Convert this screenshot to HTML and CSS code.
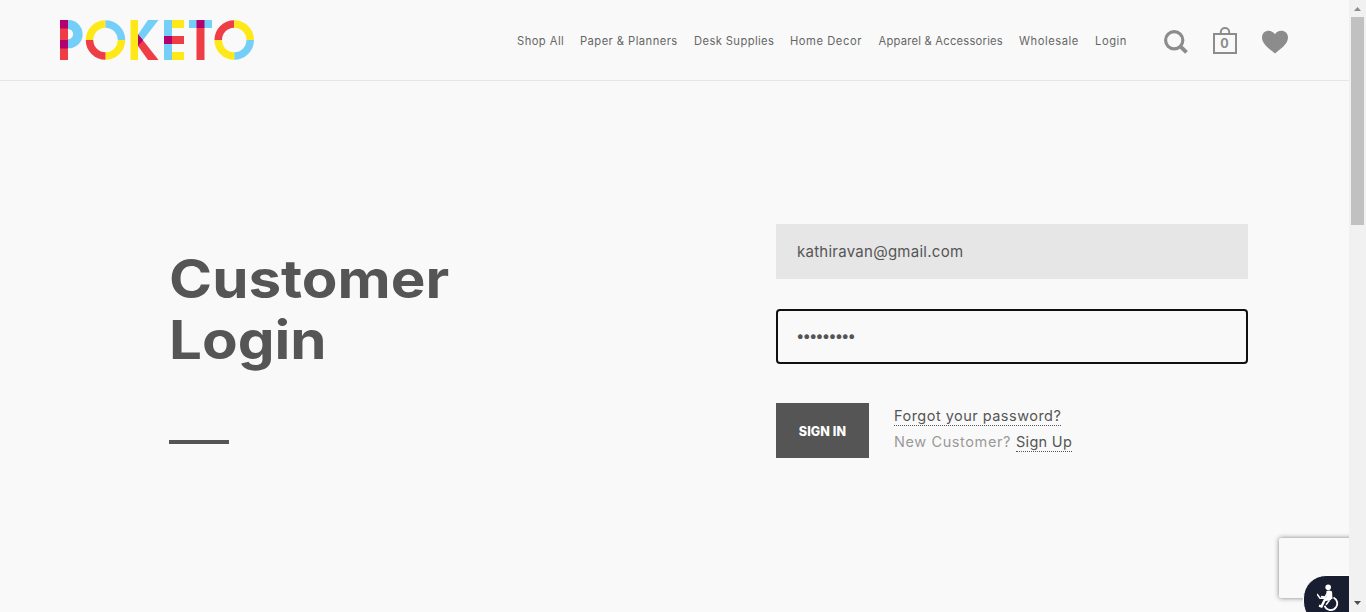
FILE: index.html
```html
<!DOCTYPE html>
<html lang="en">
<head>
<meta charset="utf-8">
<title>Customer Login – Poketo</title>
<link rel="stylesheet" href="styles.css">
</head>
<body>
<div class="page">
  <header class="header">
    <a class="logo" aria-label="Poketo">
      <svg width="195" height="40" viewBox="0 0 195 40">
        <path fill="#73cff7" d="M8 0h.5a14 14 0 0 1 0 28.300H8v-9a5.200 5.200 0 0 0 0-10.400z"/>
        <path fill="#ef3d45" d="M0 0h8v40H0z"/>
        <path fill="#b4006e" d="M0 0h8v8.500H0zM0 20h8v8.500H0z"/>
        <g fill="none" stroke-width="7.500">
          <path stroke="#ffe818" d="M29.500 20A16 16 0 0 1 45.500 4"/>
          <path stroke="#73cff7" d="M45.500 4A16 16 0 0 1 61.500 20"/>
          <path stroke="#ffe818" d="M61.500 20A16 16 0 0 1 45.500 36"/>
          <path stroke="#ef3d45" d="M45.500 36A16 16 0 0 1 29.500 20"/>
        </g>
        <path fill="#73cff7" d="M78 14.500 88 0h10.500L83 20l-5 6z"/>
        <path fill="#ef3d45" d="M78 14l20.500 26H88L78 26z"/>
        <path fill="#b4006e" d="M78 14.500l5.200 5.800L78 26z"/>
        <path fill="#ffe818" d="M70.500 0H78v40h-7.500z"/>
        <path fill="#73cff7" d="M104 0h8v40h-8z"/>
        <path fill="#ffe818" d="M112 0h12v8h-12zM112 32h12v8h-12z"/>
        <path fill="#ef3d45" d="M112 16h12v8h-12z"/>
        <path fill="#b4006e" d="M104 16h8v8h-8z"/>
        <path fill="#73cff7" d="M129 0h23v8h-23z"/>
        <path fill="#ef3d45" d="M136.500 8h8v32h-8z"/>
        <path fill="#b4006e" d="M136.500 0h8v8h-8z"/>
        <g fill="none" stroke-width="7.500">
          <path stroke="#ef3d45" d="M158.200 20A16 16 0 0 1 174.200 4"/>
          <path stroke="#ffe818" d="M174.200 4A16 16 0 0 1 190.200 20"/>
          <path stroke="#73cff7" d="M190.200 20A16 16 0 0 1 174.200 36"/>
          <path stroke="#ffe818" d="M174.200 36A16 16 0 0 1 158.200 20"/>
        </g>
      </svg>
    </a>
    <nav class="nav">
      <a class="nav-shop">Shop All</a>
      <a class="nav-paper">Paper &amp; Planners</a>
      <a class="nav-desk">Desk Supplies</a>
      <a class="nav-home">Home Decor</a>
      <a class="nav-apparel">Apparel &amp; Accessories</a>
      <a class="nav-wholesale">Wholesale</a>
      <a class="nav-login">Login</a>
    </nav>
    <div class="tools">
      <svg width="25" height="26" viewBox="0 0 25 26">
        <circle cx="10.200" cy="11.200" r="8.600" fill="none" stroke="#8c8c8c" stroke-width="3.200"/>
        <path d="M15.800 16.800l6.700 6.600" stroke="#8c8c8c" stroke-width="4"/>
      </svg>
      <span class="bag">
        <svg width="24" height="28" viewBox="0 0 24 28">
          <path d="M1 7h22v19H1zM7.800 7V5a4.200 4 0 0 1 8.400 0v2" fill="none" stroke="#8c8c8c" stroke-width="2"/>
        </svg>
        <span class="bag-count">0</span>
      </span>
      <svg width="26" height="24" viewBox="0 0 26 24">
        <path fill="#8c8c8c" d="M13 23.500C8.500 19.500 0 14.500 0 7.500 0 3.500 3 .8 6.800.8c2.700 0 5 1.300 6.200 3.500C14.200 2.100 16.500.8 19.200.8 23 .8 26 3.500 26 7.500c0 7-8.500 12-13 16z"/>
      </svg>
    </div>
  </header>
  <main class="main">
    <section class="intro">
      <h1 class="title">Customer<br>Login</h1>
      <div class="rule"></div>
    </section>
    <form class="form">
      <input class="field email" type="text" value="kathiravan@gmail.com" aria-label="Email">
      <div class="field password">•••••••••</div>
      <div class="actions">
        <button class="submit" type="button">SIGN IN</button>
        <div class="links">
          <div><a class="link forgot">Forgot your password?</a></div>
          <div class="new"><span class="new-label">New Customer?</span><a class="link signup">Sign Up</a></div>
        </div>
      </div>
    </form>
  </main>
  <div class="captcha"></div>
  <div class="access">
    <svg width="24" height="30" viewBox="0 0 24 30">
      <circle cx="11.200" cy="3.200" r="2.800" fill="#fff"/>
      <path d="M9.500 7q3-1 5.500.5l.5 7.500H9z" fill="#fff"/>
      <path d="M10 9.500l-2 3.500-4-.5M0 10l3 4.200h7" fill="none" stroke="#fff" stroke-width="1.500"/>
      <path d="M14 14.800l-6.500 1.400-3 6.300-2.500-.8" fill="none" stroke="#fff" stroke-width="2.400"/>
      <path d="M16.500 13.500c4.500 2.500 4.500 7 2.500 9.800-3 4.200-9.500 3.600-11.300-1.500" fill="none" stroke="#fff" stroke-width="1.900"/>
      <path d="M12.500 16.200l-3.500 4.500" stroke="#fff" stroke-width="1.500"/>
    </svg>
  </div>
</div>
<div class="scrollbar">
  <svg class="arrow" width="17" height="17" viewBox="0 0 17 17"><path fill="#8b8b8b" d="M5 11l3.500-4 3.500 4z"/></svg>
  <div class="thumb"></div>
  <svg class="arrow" width="17" height="17" viewBox="0 0 17 17"><path fill="#505050" d="M5 6l3.500 4L12 6z"/></svg>
</div>
</body>
</html>
```

FILE: styles.css
```css
* { box-sizing: border-box; }
body {
  margin: 0;
  display: flex;
  height: 612px;
  overflow: hidden;
  background: #f9f9f9;
  color: #555;
  font-family: Inter, "Open Sans", sans-serif;
}
.page { position: relative; width: 1349px; height: 612px; overflow: hidden; }
.header {
  display: flex;
  align-items: center;
  height: 81px;
  padding: 0 61px 0 60px;
  border-bottom: 1px solid #e6e6e6;
}
.logo, .logo svg { display: block; }
.nav {
  display: flex;
  margin-left: 262px;
  font-size: 11.2px;
  line-height: 20px;
  letter-spacing: 0.45px;
  white-space: nowrap;
  color: #666;
  padding-top: 2px;
}
.nav-shop { width: 63px; }
.nav-paper { width: 114px; }
.nav-desk { width: 96px; letter-spacing: 0.4px; }
.nav-home { width: 88.500px; letter-spacing: 0.55px; }
.nav-apparel { width: 140.500px; letter-spacing: 0.23px; }
.nav-wholesale { width: 76px; letter-spacing: 0.53px; }
.nav-login { width: 32px; letter-spacing: 0.55px; }
.tools { display: flex; align-items: center; margin-left: auto; padding-top: 3px; gap: 24.500px; }
.tools svg { display: block; }
.bag { position: relative; margin: -1px 1px 0 -1px; }
.bag-count {
  position: absolute;
  inset: 9px 0 auto;
  text-align: center;
  font-size: 12.500px;
  line-height: 16px;
  font-weight: 700;
  color: #8c8c8c;
}
.main { display: flex; padding: 143px 101px 0 169px; }
.intro { width: 607px; padding-top: 25px; }
.title {
  margin: 0;
  font-size: 53px;
  line-height: 61px;
  font-weight: 700;
  transform: scaleX(1.1);
  transform-origin: 0 0;
}
.rule { width: 60px; height: 4px; margin-top: 69px; background: #555; }
.form { width: 472px; }
.field {
  display: block;
  width: 472px;
  height: 55px;
  margin: 0;
  padding: 0 21px;
  border: 0;
  background: #e6e6e6;
  color: #555;
  font: 15px/55px Inter, sans-serif;
  letter-spacing: 0.26px;
}
.password {
  margin-top: 30px;
  padding: 0 18px;
  border: 2px solid #101010;
  border-radius: 4px;
  background: #f9f9f9;
  line-height: 50px;
  letter-spacing: -2px;
}
.actions { display: flex; margin-top: 39px; }
.submit {
  width: 93px;
  height: 55px;
  padding: 2px 0 0;
  border: 0;
  background: #555;
  color: #fff;
  font: 800 12.500px Inter, sans-serif;
  letter-spacing: 0.1px;
}
.links { padding: 4px 0 0 25px; font-size: 14.500px; line-height: 26px; white-space: nowrap; }
.link { display: inline-block; height: 19px; line-height: 18px; border-bottom: 1px dotted #555; vertical-align: top; }
.links > div { height: 26px; }
.forgot { letter-spacing: 0.48px; }
.new { display: flex; color: #999; }
.new-label { width: 122px; line-height: 18px; letter-spacing: 0.6px; }
.signup { color: #555; letter-spacing: 0.3px; }
.captcha {
  position: absolute;
  left: 1279px;
  top: 538px;
  width: 256px;
  height: 60px;
  border-radius: 2px;
  background: #f9f9f9;
  box-shadow: 0 0 5px gray;
}
.access {
  position: absolute;
  left: 1303px;
  top: 575px;
  width: 60px;
  height: 50px;
  padding: 8px 0 0 13px;
  border: 1px solid #fff;
  border-radius: 23px 0 0 23px;
  background: #181d30;
}
.scrollbar { width: 17px; height: 612px; display: flex; flex-direction: column; background: #f1f1f1; }
.arrow { display: block; flex: none; }
.thumb { width: 13px; height: 208px; margin: 0 2px auto; background: #c1c1c1; }
```
